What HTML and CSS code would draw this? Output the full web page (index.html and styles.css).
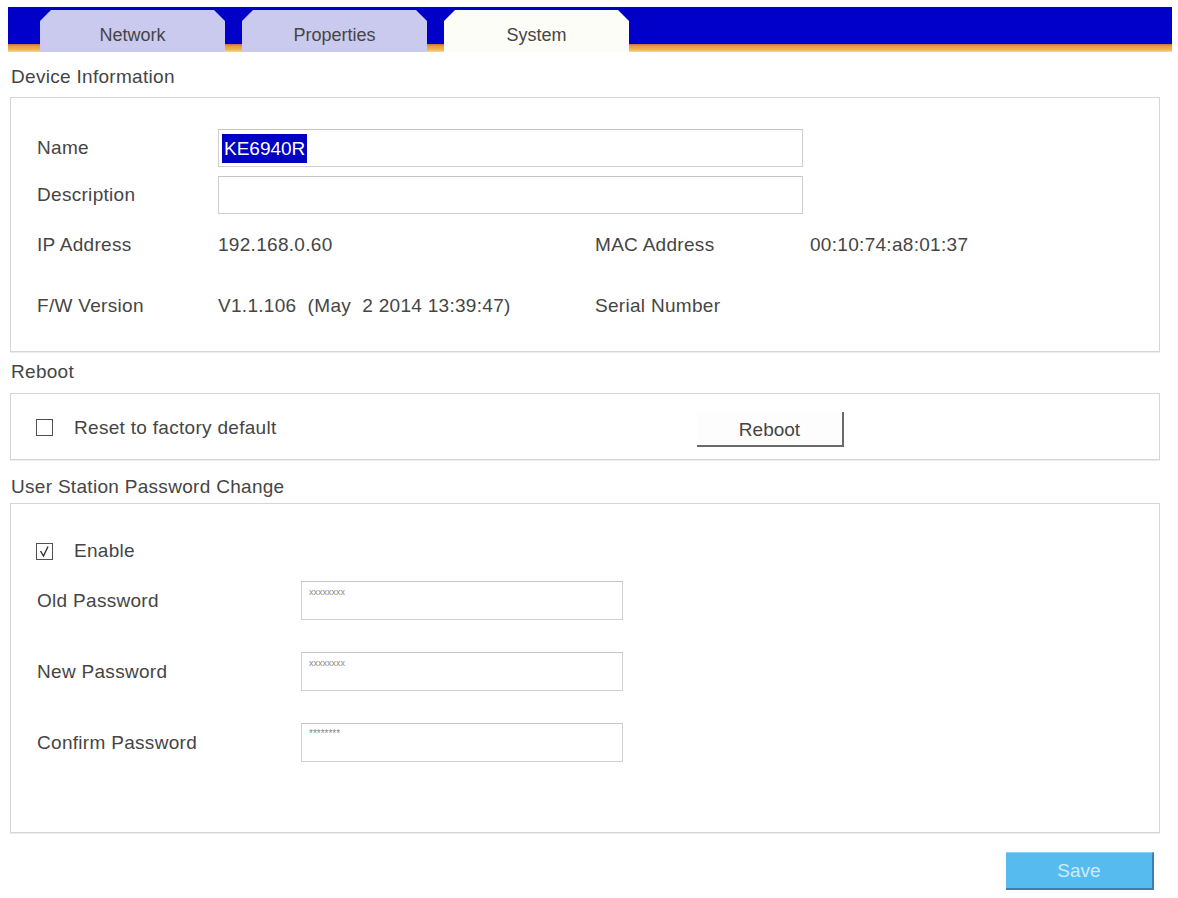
FILE: index.html
```html
<!DOCTYPE html>
<html>
<head>
<meta charset="utf-8">
<link rel="stylesheet" href="styles.css">
</head>
<body>
<div class="tabbar">
  <div class="tab">Network</div>
  <div class="tab">Properties</div>
  <div class="tab active">System</div>
</div>
<div class="content">
  <div class="sec-title first">Device Information</div>
  <div class="box info">
    <div class="lbl">Name</div>
    <div class="field wide"><span class="sel">KE6940R</span></div>
    <div class="lbl">Description</div>
    <div class="field wide"></div>
    <div class="lbl row-ip">IP Address</div>
    <div class="val row-ip">192.168.0.60</div>
    <div class="lbl row-ip">MAC Address</div>
    <div class="val row-ip">00:10:74:a8:01:37</div>
    <div class="lbl row-fw">F/W Version</div>
    <div class="val row-fw">V1.1.106&nbsp; (May&nbsp; 2 2014 13:39:47)</div>
    <div class="lbl row-fw">Serial Number</div>
    <div class="val row-fw"></div>
  </div>

  <div class="sec-title reboot-title">Reboot</div>
  <div class="box reboot">
    <label class="check reset">
      <span class="cb"></span>
      <span>Reset to factory default</span>
    </label>
    <button class="btn-reboot">Reboot</button>
  </div>

  <div class="sec-title pw-title">User Station Password Change</div>
  <div class="box pw">
    <label class="check enable">
      <span class="cb"><svg viewBox="0 0 15 15" width="15" height="15"><polyline points="3.5,7 6.5,12 11,2.5" fill="none" stroke="#333" stroke-width="1.4"/></svg></span>
      <span>Enable</span>
    </label>
    <div class="pw-row">
      <div class="pw-lbl">Old Password</div>
      <div class="pw-field">xxxxxxxx</div>
    </div>
    <div class="pw-row">
      <div class="pw-lbl">New Password</div>
      <div class="pw-field">xxxxxxxx</div>
    </div>
    <div class="pw-row">
      <div class="pw-lbl">Confirm Password</div>
      <div class="pw-field stars">********</div>
    </div>
  </div>

  <div class="actions">
    <button class="btn-save">Save</button>
  </div>
</div>
</body>
</html>
```

FILE: styles.css
```css
html, body {
  margin: 0;
  padding: 0;
  background: #ffffff;
}
body {
  font-family: "Liberation Sans", Arial, sans-serif;
  font-size: 19px;
  color: #454545;
  letter-spacing: 0.3px;
}
.tabbar {
  margin: 7px 6px 0 8px;
  height: 45px;
  display: flex;
  align-items: flex-end;
  gap: 17px;
  padding-left: 32px;
  background: linear-gradient(to bottom, #0000c6 0, #0000cc 37px, #c06a4a 37px, #e89a40 39px, #f0b850 43px, #f8dca0 45px);
}
.tab {
  width: 185px;
  height: 42px;
  box-sizing: border-box;
  padding-top: 15px;
  text-align: center;
  font-size: 18px;
  letter-spacing: 0;
  background: #cacaee;
  color: #454545;
  clip-path: polygon(11px 0, calc(100% - 11px) 0, 100% 11px, 100% 100%, 0 100%, 0 11px);
}
.tab.active {
  background: #fdfdf7;
}
.content {
  margin: 0 18px 0 10px;
}
.sec-title {
  line-height: 20px;
  padding-left: 1px;
}
.sec-title.first {
  padding-top: 15px;
  margin-bottom: 10px;
}
.reboot-title {
  padding-top: 10px;
  margin-bottom: 11px;
}
.pw-title {
  padding-top: 17px;
  margin-bottom: 6px;
}
.box {
  border: 1px solid #d6d6d6;
  box-shadow: 0 1px 0 #ececec;
  background: #fff;
}
.info {
  height: 255px;
  box-sizing: border-box;
  padding: 31px 0 0 26px;
  display: grid;
  grid-template-columns: 181px 377px 215px 1fr;
  grid-template-rows: 38px 38px 30px 30px;
  row-gap: 9px;
  align-items: center;
}
.info .row-ip { margin-top: 14px; }
.info .row-fw { margin-top: 58px; }
.lbl, .val {
  line-height: 30px;
}
.field {
  height: 38px;
  box-sizing: border-box;
  border: 1px solid #cfcfcf;
  border-top-color: #c4c4c4;
  background: #fff;
  display: flex;
  align-items: center;
  padding-left: 3px;
}
.field.wide {
  grid-column: 2 / span 3;
  width: 585px;
}
.sel {
  background: #0000c4;
  color: #ffffff;
  line-height: 29px;
  padding: 0 2px;
  letter-spacing: 0;
}
.reboot {
  height: 67px;
  box-sizing: border-box;
  display: flex;
  align-items: center;
  padding: 2px 0 0 25px;
}
.check {
  display: flex;
  align-items: center;
  gap: 21px;
}
.check.reset {
  width: 661px;
}
.cb {
  width: 17px;
  height: 17px;
  flex: none;
  box-sizing: border-box;
  border: 1.5px solid #505050;
  background: #fff;
  display: flex;
  align-items: center;
  justify-content: center;
}
.btn-reboot {
  width: 147px;
  height: 35px;
  font: inherit;
  letter-spacing: 0;
  color: #454545;
  background: #fdfdfd;
  border: none;
  border-right: 2px solid #6a6a6a;
  border-bottom: 2px solid #6a6a6a;
  padding: 2px 0 0 0;
  margin-top: 4px;
}
.pw {
  height: 330px;
  box-sizing: border-box;
  padding: 37px 0 0 25px;
}
.enable {
  line-height: 20px;
  margin-bottom: 20px;
}
.pw-row {
  display: flex;
  align-items: center;
  height: 39px;
  margin-bottom: 32px;
  padding-left: 1px;
}
.pw-lbl {
  width: 264px;
}
.pw-field {
  width: 322px;
  height: 39px;
  box-sizing: border-box;
  border: 1px solid #d0d0d0;
  border-top-color: #c6c6c6;
  font-size: 9px;
  letter-spacing: 0;
  color: #8a8a8a;
  padding: 5px 0 0 7px;
  line-height: 10px;
}
.pw-field.stars {
  font-size: 10px;
}
.actions {
  display: flex;
  justify-content: flex-end;
  padding-top: 19px;
  padding-right: 6px;
}
.btn-save {
  width: 148px;
  height: 38px;
  font: inherit;
  letter-spacing: 0;
  background: #56bcf0;
  color: #cfeafc;
  border: none;
  border-right: 2px solid #3c7eb0;
  border-bottom: 2px solid #3c7eb0;
  border-top: 1px solid #8fd0f4;
}
```
